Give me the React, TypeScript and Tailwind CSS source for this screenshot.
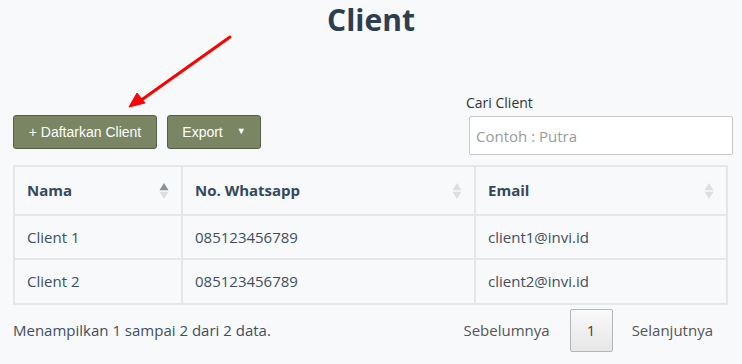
const rows = [
  { nama: "Client 1", wa: "085123456789", email: "client1@invi.id" },
  { nama: "Client 2", wa: "085123456789", email: "client2@invi.id" },
];

// Sort arrows in the table header
function SortIcon({ active }: { active?: boolean }) {
  return (
    <svg width="10" height="18" viewBox="0 0 10 18" className="shrink-0">
      <path d="M5 1 L9.5 8.3 L0.5 8.3 Z" fill={active ? "#8a9199" : "#dcdfe2"} />
      <path d="M5 17 L9.5 9.7 L0.5 9.7 Z" fill="#dcdfe2" />
    </svg>
  );
}

export default function App() {
  return (
    <div className="relative min-h-[364px] w-[742px] bg-[#f8f9fa] font-['Open_Sans',sans-serif] text-[#3f4f60]">
      <h1 className="pt-[1px] text-center text-[30px] font-bold leading-[38px] text-[#2c3e50]">Client</h1>

      {/* red pointer arrow */}
      <svg className="absolute left-[120px] top-[30px]" width="120" height="85" viewBox="0 0 120 85">
        <line x1="110" y1="7" x2="20" y2="71" stroke="#ff0000" strokeWidth="3" strokeLinecap="round" />
        <path d="M9 77 L17 63 L25 73 Z" fill="#ff0000" stroke="#ff0000" strokeWidth="1" strokeLinejoin="round" />
      </svg>

      <div className="mt-[54px] flex items-end justify-between pl-[13px] pr-[9px]">
        <div className="mb-[6px] flex gap-[10px] font-['Liberation_Sans',Arial,sans-serif] text-[14px] text-white">
          <button className="h-[34px] w-[144px] rounded-[3px] border border-[#555f46] bg-[#7a8663]">
            + Daftarkan Client
          </button>
          <button className="flex h-[34px] w-[94px] items-center justify-center gap-[14px] rounded-[3px] border border-[#555f46] bg-[#7a8663]">
            <span>Export</span>
            <span className="text-[9px]">▼</span>
          </button>
        </div>
        <div className="flex w-[267px] flex-col">
          <label className="text-[14px] leading-[20px] text-[#333]">Cari Client</label>
          <input
            placeholder="Contoh : Putra"
            className="ml-[3px] mt-[3px] h-[39px] w-[264px] rounded-[2px] border border-[#c8c8c8] bg-white px-[6px] text-[15px] placeholder:text-[#9a9a9a]"
          />
        </div>
      </div>

      <div className="mx-[13px] mt-[10px] w-[715px]">
        <table className="w-full border-collapse text-[15px]">
          <thead>
            <tr className="h-[49px] border-b-2 border-b-[#aab0b5]">
              <th className="w-[168px] border-2 border-b-0 border-[#e3e7ea] px-[12px] text-left">
                <div className="flex items-center justify-between font-bold text-[#34495e]">
                  Nama <SortIcon active />
                </div>
              </th>
              <th className="w-[293px] border-2 border-b-0 border-[#e3e7ea] px-[12px] text-left">
                <div className="flex items-center justify-between font-bold text-[#34495e]">
                  No. Whatsapp <SortIcon />
                </div>
              </th>
              <th className="border-2 border-b-0 border-[#e3e7ea] px-[12px] text-left">
                <div className="flex items-center justify-between font-bold text-[#34495e]">
                  Email <SortIcon />
                </div>
              </th>
            </tr>
          </thead>
          <tbody>
            {rows.map((r, i) => (
              <tr
                key={r.nama}
                className={i === rows.length - 1 ? "h-[45px] border-b-2 border-b-[#c4c8cb]" : "h-[44px]"}
              >
                <td className="border-2 border-[#e3e7ea] px-[12px]">{r.nama}</td>
                <td className="border-2 border-[#e3e7ea] px-[12px]">{r.wa}</td>
                <td className="border-2 border-[#e3e7ea] px-[12px]">{r.email}</td>
              </tr>
            ))}
          </tbody>
        </table>

        <div className="mt-[4px] flex items-center justify-between text-[15px]">
          <span>Menampilkan 1 sampai 2 dari 2 data.</span>
          <div className="mr-[15px] flex items-center">
            <span className="mr-[20px] text-[#555]">Sebelumnya</span>
            <span className="flex h-[43px] w-[43px] items-center justify-center rounded-[2px] border border-[#b5b5b5] bg-gradient-to-b from-[#fafafa] to-[#e6e6e6] text-[#444]">
              1
            </span>
            <span className="ml-[19px] text-[#555]">Selanjutnya</span>
          </div>
        </div>
      </div>
    </div>
  );
}
